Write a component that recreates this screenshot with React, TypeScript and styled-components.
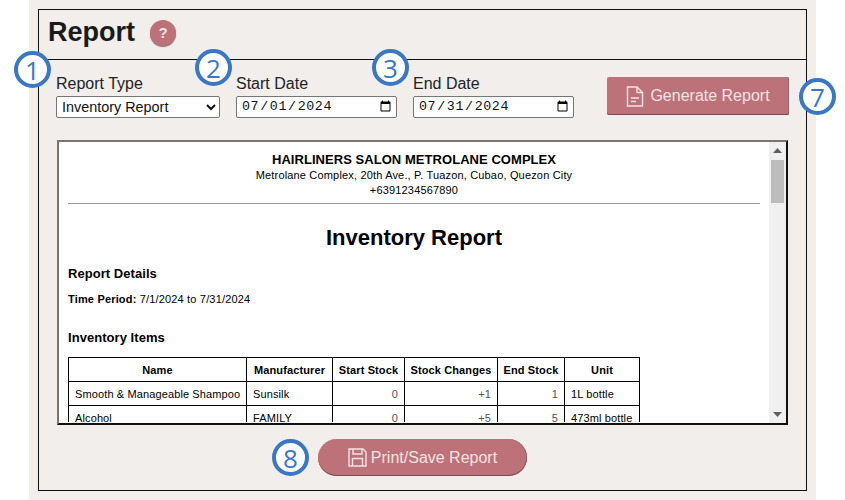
import styled, { createGlobalStyle } from 'styled-components'

const GlobalStyle = createGlobalStyle`
  html, body {
    margin: 0;
    padding: 0;
    background: #ffffff;
    font-family: 'Liberation Sans', Arial, sans-serif;
    color: #111111;
  }
`

const Page = styled.div`
  width: 787px;
  height: 500px;
  margin-left: 29px;
  padding: 9px;
  box-sizing: border-box;
  background: #f1eeeb;
`

const Panel = styled.div`
  height: 482px;
  box-sizing: border-box;
  border: 1px solid #111111;
  display: flex;
  flex-direction: column;
`

const TitleBar = styled.div`
  height: 50px;
  flex: none;
  display: flex;
  align-items: center;
  gap: 15px;
  padding: 0 0 4px 9px;
  box-sizing: border-box;
  border-bottom: 1px solid #111111;
`

const Title = styled.h1`
  margin: 0;
  font-size: 27px;
  font-weight: 700;
  color: #1a1a1a;
`

const HelpButton = styled.span`
  width: 26px;
  height: 26px;
  border-radius: 50%;
  background: #bd727a;
  box-shadow: 0 1px 1px rgba(70, 30, 35, 0.6);
  color: #f4e4e4;
  font-size: 15px;
  font-weight: 700;
  display: flex;
  align-items: center;
  justify-content: center;
`

const FormRow = styled.div`
  position: relative;
  height: 80px;
  flex: none;
  display: flex;
  align-items: flex-start;
  padding: 13px 17px 0 17px;
  box-sizing: border-box;
`

const Field = styled.label<{ $width: number }>`
  width: ${p => p.$width}px;
  margin-right: 16px;
  display: flex;
  flex-direction: column;
  font-size: 16px;
  line-height: 18px;
  color: #222222;
  flex: none;
  padding-top: 2px;
`

const baseInput = `
  height: 22px;
  box-sizing: border-box;
  margin: 3px 0 0;
  width: 100%;
  background: #ffffff;
  border: 1px solid #767676;
  border-radius: 2px;
  color: #111111;
`

const Select = styled.select`
  ${baseInput}
  font-family: 'Liberation Sans', Arial, sans-serif;
  font-size: 14.4px;
  padding-left: 1px;
`

const DateInput = styled.input`
  ${baseInput}
  font-family: 'Liberation Mono', monospace;
  font-size: 13.33px;
  letter-spacing: 0.6px;
  padding: 0 2px 0 4px;
`

const PrimaryButton = styled.button<{ $pill?: boolean }>`
  display: flex;
  align-items: center;
  justify-content: center;
  gap: 6px;
  border: none;
  background: #bd727a;
  color: #f2e3e3;
  font-family: 'Liberation Sans', Arial, sans-serif;
  font-size: 16px;
  box-shadow: inset 0 -1px 0 #7d4a51, inset -1px 0 0 #a0626a;
  border-radius: ${p => (p.$pill ? '19px' : '2px')};
  padding: 0;
`

const GenerateButton = styled(PrimaryButton)`
  width: 182px;
  height: 38px;
  margin-left: 17px;
  margin-top: 4px;
`

const Badge = styled.span<{ $left: number; $top: number }>`
  position: absolute;
  left: ${p => p.$left}px;
  top: ${p => p.$top}px;
  width: 37px;
  height: 37px;
  box-sizing: border-box;
  border: 4px solid #3a77c4;
  border-radius: 50%;
  background: #ffffff;
  color: #3a77c4;
  font-family: 'Open Sans', 'Liberation Sans', sans-serif;
  font-size: 26px;
  display: flex;
  align-items: center;
  justify-content: center;
  line-height: 1;
`

const Viewer = styled.div`
  height: 285px;
  margin: 0 18px;
  flex: none;
  box-sizing: border-box;
  border: 2px solid;
  border-color: #767676 #111111 #111111 #767676;
  background: #ffffff;
  display: flex;
  overflow: hidden;
`

const Sheet = styled.div`
  flex: 1;
  min-width: 0;
  margin-bottom: 1px;
  overflow: hidden;
  box-sizing: border-box;
  padding: 10px 9px 0;
  color: #000000;
`

const Rail = styled.div`
  width: 17px;
  flex: none;
  background: #f0f0f0;
  display: flex;
  flex-direction: column;
  align-items: center;
`

const RailButton = styled.div`
  height: 17px;
  flex: none;
  display: flex;
  align-items: center;
  justify-content: center;
`

const Thumb = styled.div`
  width: 13px;
  height: 43px;
  margin-top: 1px;
  background: #bdbdbd;
`

const RailSpacer = styled.div`
  flex: 1;
`

const Company = styled.div`
  text-align: center;
  font-size: 13px;
  font-weight: 700;
  line-height: 16px;
  letter-spacing: 0.05px;
`

const CompanyLine = styled.div`
  text-align: center;
  font-size: 11px;
  line-height: 15px;
  letter-spacing: 0.17px;
`

const Rule = styled.hr`
  margin: 5px 0 0;
  border: none;
  border-top: 1px solid #999999;
`

const ReportName = styled.h2`
  margin: 21px 0 0;
  text-align: center;
  font-size: 22px;
  line-height: 26px;
  font-weight: 700;
`

const SectionTitle = styled.h3<{ $top: number }>`
  margin: ${p => p.$top}px 0 0;
  font-size: 13px;
  line-height: 16px;
  font-weight: 700;
  letter-spacing: 0.05px;
`

const Period = styled.p`
  margin: 10px 0 0;
  font-size: 11px;
  line-height: 14px;
  letter-spacing: 0.17px;

  b {
    font-weight: 700;
  }
`

const Table = styled.table`
  margin-top: 11px;
  border-collapse: collapse;
  table-layout: fixed;
  width: 571px;
  font-size: 11px;
  letter-spacing: 0.12px;
`

const Th = styled.th<{ $width: number }>`
  width: ${p => p.$width}px;
  height: 24px;
  padding: 0;
  box-sizing: border-box;
  border: 1px solid #000000;
  text-align: center;
  font-weight: 700;
`

const Td = styled.td<{ $num?: boolean }>`
  height: 24px;
  padding: 0 6px;
  box-sizing: border-box;
  border: 1px solid #000000;
  white-space: nowrap;
  text-align: ${p => (p.$num ? 'right' : 'left')};
  color: ${p => (p.$num ? '#555555' : '#000000')};
`

const Footer = styled.div`
  position: relative;
  flex: 1;
  display: flex;
  justify-content: center;
  padding-top: 14px;
  box-sizing: border-box;
`

const PrintButton = styled(PrimaryButton)`
  width: 209px;
  height: 37px;
  gap: 4px;
`

const columns = [
  { name: 'Name', width: 178 },
  { name: 'Manufacturer', width: 86 },
  { name: 'Start Stock', width: 72 },
  { name: 'Stock Changes', width: 93 },
  { name: 'End Stock', width: 67 },
  { name: 'Unit', width: 75 },
]

const rows = [
  ['Smooth & Manageable Shampoo', 'Sunsilk', '0', '+1', '1', '1L bottle'],
  ['Alcohol', 'FAMILY', '0', '+5', '5', '473ml bottle'],
]

const DocumentIcon = () => (
  <svg width="18" height="21" viewBox="0 0 18 21" fill="none" stroke="#f2e3e3" strokeWidth="1.4">
    <path d="M1.5 1H11L16.5 6.5V20H1.5Z" />
    <path d="M11 1V6.5H16.5" />
    <path d="M5 12H13M5 15.5H10" />
  </svg>
)

const SaveIcon = () => (
  <svg width="19" height="19" viewBox="0 0 19 19" fill="none" stroke="#f2e3e3" strokeWidth="1.4">
    <path d="M1 1H15L18 4V18H1Z" />
    <path d="M5 1V6H14V1" />
    <path d="M4.5 18V10.5H14.5V18" />
  </svg>
)

const ArrowIcon = ({ down }: { down?: boolean }) => (
  <svg width="9" height="5" viewBox="0 0 9 5" fill="#606060">
    <path d={down ? 'M0 0H9L4.5 5Z' : 'M4.5 0L9 5H0Z'} />
  </svg>
)

const App = () => {
  return (
    <Page>
      <GlobalStyle />
      <Panel>
        <TitleBar>
          <Title>Report</Title>
          <HelpButton>?</HelpButton>
        </TitleBar>

        <FormRow>
          <Badge $left={-25} $top={-9}>1</Badge>
          <Badge $left={156} $top={-11}>2</Badge>
          <Badge $left={333} $top={-11}>3</Badge>
          <Badge $left={760} $top={18}>7</Badge>
          <Field $width={164}>
            Report Type
            <Select defaultValue="inventory">
              <option value="inventory">Inventory Report</option>
            </Select>
          </Field>
          <Field $width={161}>
            Start Date
            <DateInput type="date" defaultValue="2024-07-01" />
          </Field>
          <Field $width={161}>
            End Date
            <DateInput type="date" defaultValue="2024-07-31" />
          </Field>
          <GenerateButton>
            <DocumentIcon />
            Generate Report
          </GenerateButton>
        </FormRow>

        <Viewer>
          <Sheet>
            <Company>HAIRLINERS SALON METROLANE COMPLEX</Company>
            <CompanyLine>Metrolane Complex, 20th Ave., P. Tuazon, Cubao, Quezon City</CompanyLine>
            <CompanyLine>+6391234567890</CompanyLine>
            <Rule />
            <ReportName>Inventory Report</ReportName>
            <SectionTitle $top={15}>Report Details</SectionTitle>
            <Period>
              <b>Time Period:</b> 7/1/2024 to 7/31/2024
            </Period>
            <SectionTitle $top={24}>Inventory Items</SectionTitle>
            <Table>
              <thead>
                <tr>
                  {columns.map(c => (
                    <Th key={c.name} $width={c.width}>{c.name}</Th>
                  ))}
                </tr>
              </thead>
              <tbody>
                {rows.map(r => (
                  <tr key={r[0]}>
                    <Td>{r[0]}</Td>
                    <Td>{r[1]}</Td>
                    <Td $num>{r[2]}</Td>
                    <Td $num>{r[3]}</Td>
                    <Td $num>{r[4]}</Td>
                    <Td>{r[5]}</Td>
                  </tr>
                ))}
              </tbody>
            </Table>
          </Sheet>
          <Rail>
            <RailButton><ArrowIcon /></RailButton>
            <Thumb />
            <RailSpacer />
            <RailButton><ArrowIcon down /></RailButton>
          </Rail>
        </Viewer>

        <Footer>
          <Badge $left={233} $top={14}>8</Badge>
          <PrintButton $pill>
            <SaveIcon />
            Print/Save Report
          </PrintButton>
        </Footer>
      </Panel>
    </Page>
  )
}

export default App
